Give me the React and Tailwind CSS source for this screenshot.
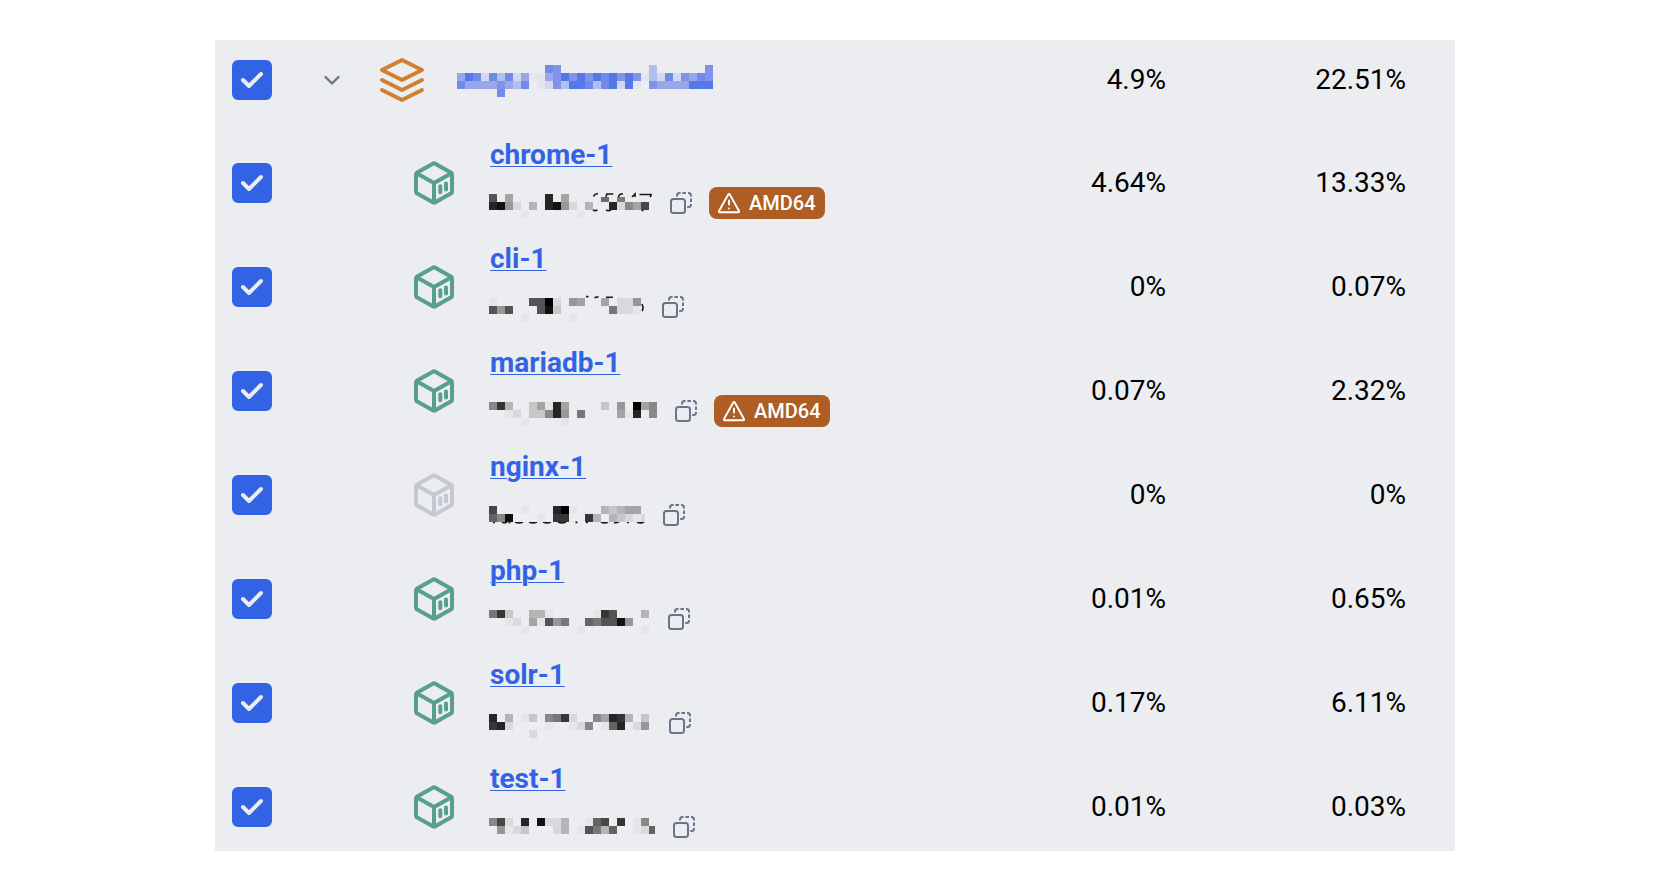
import { useState } from "react";

const GRAYS = {
  0: "#000000", 1: "#121212", 2: "#252525", 3: "#363636", 4: "#474747", 5: "#545454",
  6: "#636363", 7: "#777777", 8: "#888888", 9: "#969696", a: "#a4a4a5", b: "#b5b5b7",
  c: "#c6c7c9", d: "#d8d9dc", e: "#e5e6e9", f: "#edeef1",
};

const BLUES = {
  a: "#5578e8", b: "#6f8aea", c: "#8092ea", d: "#99a6e9", e: "#b2bfec", f: "#d3d8ee", g: "#e3e6f0",
};

const GROUP_CELLS = [
  "...........bc...........e......c",
  "dabfbebfdggdcacacabacacgefbfcdbc",
  "bddddcdeb.gfceaabebafag.cddddaaa",
  ".....b",
];

// Ends of strokes that stay visible around the masked cells.
const SPECKS = {
  chrome:
    "M104.5 9.5q1-2.5 4.5-3M117 10l.8-3h6.5M129.5 10q.5-3 4.5-3.2M143 10l3-3v3M150.5 7.5h12l-1.5 2.5M104 23q2 1.2 4.5 0M117 23q2.5 1.2 5 0M152.5 23.4h2",
  cli: "M97 5.6h2.5M105.5 6.6l4-.8M117 6.3h7M153 13q2 4 0 7",
  nginx:
    "M4 23.4h2M13 23q2.5 1.5 5 0M19.5 23.4h2M26 23q4 1.8 8 0M40 23q4 1.8 8 0M54 23q4 1.8 8 0M69 23q4 1.8 8 0M86.5 23.4h2M97 23.4h2M112 23q3.5 1.8 7 0M125 23.6q3 .4 5-.8M138 23.4h2M148 23q3.5 1.8 7 0",
};

const CONTAINERS = [
  {
    name: "chrome-1", running: true, amd64: true, cpu: "4.64%", mem: "13.33%", idWidth: 163, specks: SPECKS.chrome,
    cells: ["5.a....2.a", "219d.b.219d.b..2d8a4", "....e......e"],
  },
  {
    name: "cli-1", running: true, cpu: "0%", mem: "0.07%", idWidth: 155, specks: SPECKS.cli,
    cells: ["e....550d.9a..a.dd9", "595...51c......7dde", "....e.....e"],
  },
  {
    name: "mariadb-1", running: true, amd64: true, cpu: "0.07%", mem: "2.32%", idWidth: 168,
    cells: ["83b..cae2a....c.9.0a8", "..ed.cc829.7....ae2.8", "....e....e"],
  },
  {
    name: "nginx-1", running: false, cpu: "0%", mem: "0%", idWidth: 156, specks: SPECKS.nginx,
    cells: ["4fffefff20e...bcbaa", "681fffef33..3bfbcded"],
  },
  {
    name: "php-1", running: true, cpu: "0.01%", mem: "0.65%", idWidth: 161,
    cells: ["73c..bbe.....e35...b", "..ed.ae597..675519.f", "....e......e.......e"],
  },
  {
    name: "solr-1", running: true, cpu: "0.17%", mem: "6.11%", idWidth: 162,
    cells: ["2.b.ec.873d..8a23b.c", "32d..f.e..ed8.e62.d9", ".....d"],
  },
  {
    name: "test-1", running: true, cpu: "0.01%", mem: "0.03%", idWidth: 166,
    cells: ["84d.2.1ddb..e64.3.e8", "f9edc.ffdb.e57b6ffed6"],
  },
];

function Cells({ rows, palette, top }) {
  return rows.flatMap((row, r) =>
    [...row].map((level, c) =>
      level === "." ? null : (
        <rect key={`${r}-${c}`} x={c * 8} y={top + r * 8} width="8" height="8" fill={palette[level]} shapeRendering="crispEdges" />
      ),
    ),
  );
}

function MaskedId({ rows, width, specks }) {
  return (
    <svg width={width} height="32" className="shrink-0" aria-hidden="true">
      {specks && <path d={specks} stroke="#1a1a1a" strokeWidth="1.6" fill="none" />}
      <Cells rows={rows} palette={GRAYS} top={7} />
      {specks === SPECKS.chrome && (
        <>
          <rect x="112" y="10" width="8" height="5" fill="#6d6d6d" />
          <rect x="128" y="10" width="8" height="5" fill="#7d7d7e" />
        </>
      )}
    </svg>
  );
}

function Checkbox({ label }) {
  const [checked, setChecked] = useState(true);
  return (
    <label className="grid size-10 cursor-pointer">
      <input
        type="checkbox"
        aria-label={label}
        checked={checked}
        onChange={(e) => setChecked(e.target.checked)}
        className="col-start-1 row-start-1 size-10 appearance-none rounded-md border-2 border-[#3363e5] checked:bg-[#3363e5]"
      />
      {checked && (
        <svg viewBox="0 0 40 40" className="pointer-events-none col-start-1 row-start-1 size-10" fill="none" stroke="#ecedf1" strokeWidth="4" strokeLinecap="round" strokeLinejoin="round">
          <path d="M11 20L17 26L29 14" />
        </svg>
      )}
    </label>
  );
}

function StackIcon() {
  return (
    <svg viewBox="0 0 44 44" className="size-11 shrink-0" fill="none" stroke="#d07f30" strokeWidth="3.8" strokeLinecap="round" strokeLinejoin="round">
      <path d="M22 2L42 12L22 22L2 12ZM2 22L22 32L42 22M2 32L22 42L42 32" />
    </svg>
  );
}

function CubeIcon({ running }) {
  return (
    <svg viewBox="0 0 40 44" className={`h-11 w-10 shrink-0 ${running ? "text-[#589f8c]" : "text-[#c5c7d1]"}`} fill="none" stroke="currentColor" strokeWidth="4" strokeLinecap="round" strokeLinejoin="round">
      <path d="M18.8 2.7Q20 2 21.2 2.7L36.8 11.4Q38 12.1 38 13.5V30.5Q38 31.9 36.8 32.6L21.2 41.3Q20 42 18.8 41.3L3.2 32.6Q2 31.9 2 30.5V13.5Q2 12.1 3.2 11.4Z" />
      <path d="M3 12.5L20 22L37 12.5M20 22V41" />
      <path d="M26.3 25.2V31.2M32 22.6V28.6" />
    </svg>
  );
}

function CopyIcon() {
  return (
    <svg viewBox="0 0 22 22" className="size-[22px]" fill="none" stroke="#6b7589" strokeWidth="2">
      <rect x="1" y="7" width="14" height="14" rx="2.5" />
      <path d="M7 4.6V3.5Q7 1 9.5 1H10.6M12.4 1H16M18 1H18.5Q21 1 21 3.5V4.6M21 6.4V10M21 12V12.5Q21 15 18.5 15H17.2" />
    </svg>
  );
}

function Amd64Badge() {
  return (
    <span className="flex h-8 items-center gap-[9px] rounded-lg bg-[#ae5d24] px-[9px] text-xl font-medium text-white">
      <svg viewBox="0 0 22 22" className="size-[22px]" fill="none" stroke="currentColor" strokeWidth="1.9" strokeLinecap="round" strokeLinejoin="round">
        <path d="M10.2 2.5Q11 1.2 11.8 2.5L21 19Q21.4 20.3 20.2 20.3H1.8Q.6 20.3 1 19Z" />
        <path d="M11 8.5V12.5M11 16.4V16.5" />
      </svg>
      AMD64
    </span>
  );
}

export default function App() {
  return (
    <main className="bg-white pt-10 pr-[221px] pb-7 pl-[215px] font-[Roboto,sans-serif] text-[28px] leading-7 text-black">
      <table className="w-full table-fixed border-collapse bg-[#ecedf1]">
        <colgroup>
          <col className="w-[87px]" />
          <col className="w-[60px]" />
          <col />
          <col className="w-[160px]" />
          <col className="w-[289px]" />
        </colgroup>
        <tbody>
          <tr>
            <td className="pt-5 pb-[39px] pl-[17px]">
              <Checkbox label="Select group" />
            </td>
            <td className="pt-5 pb-[39px]">
              <button type="button" aria-label="Collapse group" className="mx-auto flex size-10 items-center justify-center">
                <svg viewBox="0 0 16 16" className="size-4" fill="none" stroke="#6b7589" strokeWidth="2.4" strokeLinecap="round" strokeLinejoin="round">
                  <path d="M1.5 5L8 11.5L14.5 5" />
                </svg>
              </button>
            </td>
            <td className="pt-[18px] pb-[37px] pl-[18px]">
              <div className="flex items-center gap-[33px]">
                <StackIcon />
                <a href="#group" aria-label="Group">
                  <svg width="256" height="34" className="block" aria-hidden="true">
                    <Cells rows={GROUP_CELLS} palette={BLUES} top={2} />
                  </svg>
                </a>
              </div>
            </td>
            <td className="pt-5 pb-[39px] text-right">4.9%</td>
            <td className="pt-5 pb-[39px] pr-[49px] text-right">22.51%</td>
          </tr>
          {CONTAINERS.map((c, i) => {
            const gap = i === CONTAINERS.length - 1 ? "pb-0" : "pb-4";
            return (
              <tr key={c.name}>
                <td className={`pl-[17px] ${gap}`}>
                  <Checkbox label={`Select ${c.name}`} />
                </td>
                <td />
                <td className={`pl-[52px] ${gap}`}>
                  <div className="flex items-center gap-[35px]">
                    <CubeIcon running={c.running} />
                    <div className="flex flex-col items-start gap-[18px] pt-0.5 pb-2">
                      <a href={`#${c.name}`} className="ml-px font-bold text-[#3363e5] underline decoration-1 underline-offset-2">
                        {c.name}
                      </a>
                      <div className="flex items-center">
                        <MaskedId rows={c.cells} width={c.idWidth} specks={c.specks} />
                        <button type="button" aria-label={`Copy ${c.name} id`} className="ml-[18px]">
                          <CopyIcon />
                        </button>
                        {c.amd64 && (
                          <div className="ml-[17px]">
                            <Amd64Badge />
                          </div>
                        )}
                      </div>
                    </div>
                  </div>
                </td>
                <td className={`text-right ${gap}`}>{c.cpu}</td>
                <td className={`pr-[49px] text-right ${gap}`}>{c.mem}</td>
              </tr>
            );
          })}
        </tbody>
      </table>
    </main>
  );
}
